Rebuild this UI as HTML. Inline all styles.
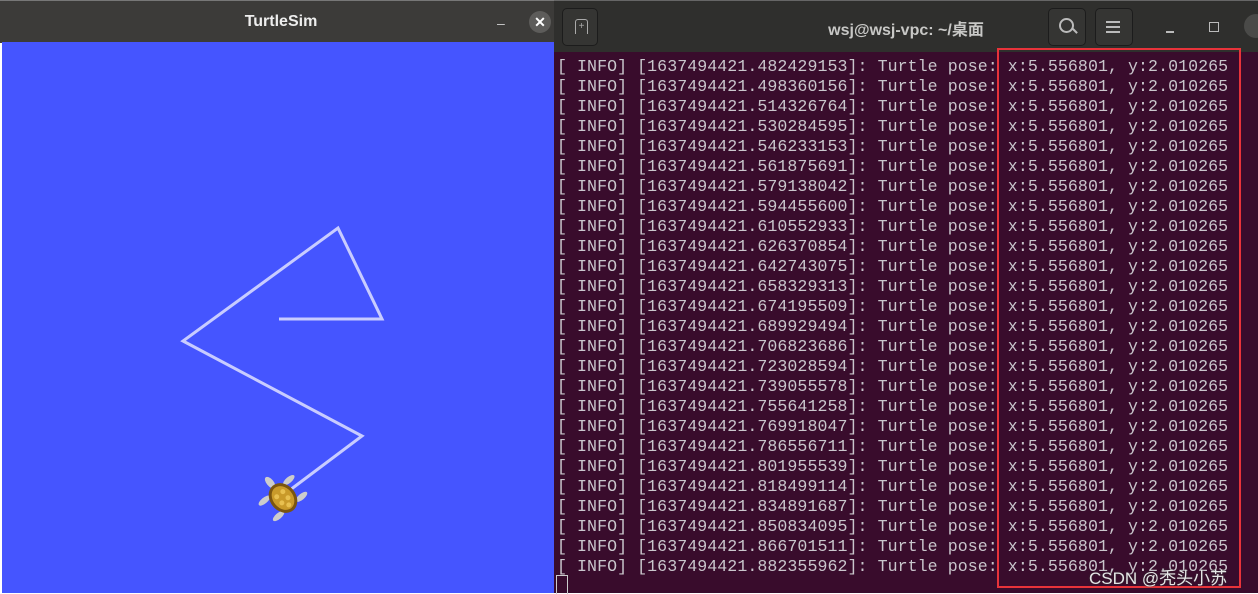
<!DOCTYPE html>
<html><head><meta charset="utf-8"><style>
body{margin:0;width:1258px;height:593px;overflow:hidden;background:#fff;position:relative;font-family:"Liberation Sans",sans-serif}
.lt{position:absolute;left:0;top:0;width:554px;height:42px;background:#3c3b39;border-top:1px solid #777}
.lt .t{position:absolute;left:0;width:562px;top:12px;text-align:center;color:#eee;font-weight:bold;font-size:16px}
.blue{position:absolute;left:2px;top:42px;width:552px;height:551px;background:#4555ff}
.rt{position:absolute;left:554px;top:0;width:704px;height:52px;background:#2f2f2d;border-top:1px solid #666}
.term{position:absolute;left:554px;top:52px;width:704px;height:541px;background:#390c2c}
pre{margin:0;position:absolute;left:557px;top:57px;font-family:"Liberation Mono",monospace;font-size:16.6px;letter-spacing:0.06px;line-height:20px;color:#c9c6cc}
.btn{position:absolute;border:1px solid #1c1c1c;background:#353533;border-radius:5px}
</style></head><body>
<div class="lt"><div class="t">TurtleSim</div>
<div style="position:absolute;left:497px;top:14px;color:#ccc;font-size:14px">–</div>
<div style="position:absolute;left:529px;top:10px;width:22px;height:22px;border-radius:50%;background:#5d5c5a;color:#fff;text-align:center;font-size:14px;line-height:22px;font-weight:bold">✕</div></div>
<div class="blue"><svg width="552" height="551" style="position:absolute;left:0;top:0">
<polyline points="277,277 380,277 336,186 181,299 360,394 288,448" fill="none" stroke="#c8ccff" stroke-width="3" stroke-linejoin="miter"/>
<g transform="translate(281,456) rotate(-40)">
<ellipse cx="0" cy="-20" rx="3.5" ry="7" fill="#ccc"/><ellipse cx="-16" cy="-10" rx="7" ry="3" fill="#ccc"/><ellipse cx="16" cy="-10" rx="7" ry="3" fill="#ccc"/><ellipse cx="-15" cy="11" rx="7" ry="3" fill="#ccc"/><ellipse cx="15" cy="11" rx="7" ry="3" fill="#ccc"/>
<ellipse cx="0" cy="0" rx="13" ry="16" fill="#7a5510"/><ellipse cx="0" cy="0" rx="10" ry="13" fill="#c99a2a"/>
<circle cx="-4" cy="-5" r="2.5" fill="#e8c050"/><circle cx="4" cy="-5" r="2.5" fill="#e8c050"/><circle cx="-4" cy="3" r="2.5" fill="#e8c050"/><circle cx="4" cy="3" r="2.5" fill="#e8c050"/><circle cx="0" cy="9" r="2.5" fill="#e8c050"/></g></svg></div>
<div class="rt">
<div class="btn" style="left:8px;top:7px;width:34px;height:36px"></div>
<div style="position:absolute;left:21px;top:18px;width:11px;height:14px;border:1.5px solid #aaa;border-bottom:none;border-radius:3px 3px 0 0;color:#aaa;font-size:10px;line-height:14px;text-align:center">+</div>
<div style="position:absolute;left:0;width:704px;top:15px;text-align:center;color:#c8c8c6;font-weight:bold;font-size:16px;font-family:'Liberation Sans','Noto Sans CJK SC',sans-serif">wsj@wsj-vpc: ~/桌面</div>
<div class="btn" style="left:494px;top:7px;width:36px;height:36px"></div>
<div style="position:absolute;left:505px;top:17px;width:11px;height:11px;border:2px solid #bbb;border-radius:50%"></div>
<div style="position:absolute;left:518px;top:29px;width:6px;height:2px;background:#bbb;transform:rotate(45deg)"></div>
<div class="btn" style="left:541px;top:7px;width:36px;height:36px"></div>
<div style="position:absolute;left:552px;top:20px;width:14px;height:2px;background:#bbb;box-shadow:0 5px 0 #bbb,0 10px 0 #bbb"></div>
<div style="position:absolute;left:612px;top:30px;width:8px;height:2px;background:#bbb"></div>
<div style="position:absolute;left:655px;top:21px;width:8px;height:8px;border:1.5px solid #bbb"></div>
<div style="position:absolute;left:690px;top:13px;width:24px;height:24px;border-radius:50%;background:#4a4a48"></div>
</div>
<div class="term"></div>
<pre>[ INFO] [1637494421.482429153]: Turtle pose: x:5.556801, y:2.010265
[ INFO] [1637494421.498360156]: Turtle pose: x:5.556801, y:2.010265
[ INFO] [1637494421.514326764]: Turtle pose: x:5.556801, y:2.010265
[ INFO] [1637494421.530284595]: Turtle pose: x:5.556801, y:2.010265
[ INFO] [1637494421.546233153]: Turtle pose: x:5.556801, y:2.010265
[ INFO] [1637494421.561875691]: Turtle pose: x:5.556801, y:2.010265
[ INFO] [1637494421.579138042]: Turtle pose: x:5.556801, y:2.010265
[ INFO] [1637494421.594455600]: Turtle pose: x:5.556801, y:2.010265
[ INFO] [1637494421.610552933]: Turtle pose: x:5.556801, y:2.010265
[ INFO] [1637494421.626370854]: Turtle pose: x:5.556801, y:2.010265
[ INFO] [1637494421.642743075]: Turtle pose: x:5.556801, y:2.010265
[ INFO] [1637494421.658329313]: Turtle pose: x:5.556801, y:2.010265
[ INFO] [1637494421.674195509]: Turtle pose: x:5.556801, y:2.010265
[ INFO] [1637494421.689929494]: Turtle pose: x:5.556801, y:2.010265
[ INFO] [1637494421.706823686]: Turtle pose: x:5.556801, y:2.010265
[ INFO] [1637494421.723028594]: Turtle pose: x:5.556801, y:2.010265
[ INFO] [1637494421.739055578]: Turtle pose: x:5.556801, y:2.010265
[ INFO] [1637494421.755641258]: Turtle pose: x:5.556801, y:2.010265
[ INFO] [1637494421.769918047]: Turtle pose: x:5.556801, y:2.010265
[ INFO] [1637494421.786556711]: Turtle pose: x:5.556801, y:2.010265
[ INFO] [1637494421.801955539]: Turtle pose: x:5.556801, y:2.010265
[ INFO] [1637494421.818499114]: Turtle pose: x:5.556801, y:2.010265
[ INFO] [1637494421.834891687]: Turtle pose: x:5.556801, y:2.010265
[ INFO] [1637494421.850834095]: Turtle pose: x:5.556801, y:2.010265
[ INFO] [1637494421.866701511]: Turtle pose: x:5.556801, y:2.010265
[ INFO] [1637494421.882355962]: Turtle pose: x:5.556801, y:2.010265</pre>
<div style="position:absolute;left:556px;top:575px;width:10px;height:18px;border:1px solid #ccc;border-bottom:none"></div>
<div style="position:absolute;left:997px;top:48px;width:240px;height:536px;border:2px solid #e8333a"></div>
<div style="position:absolute;left:1089px;top:564px;color:#e6e6e6;font-size:17px;font-family:'Liberation Sans','Noto Sans CJK SC',sans-serif;text-shadow:0 0 2px #333">CSDN @秃头小苏</div>
</body></html>
